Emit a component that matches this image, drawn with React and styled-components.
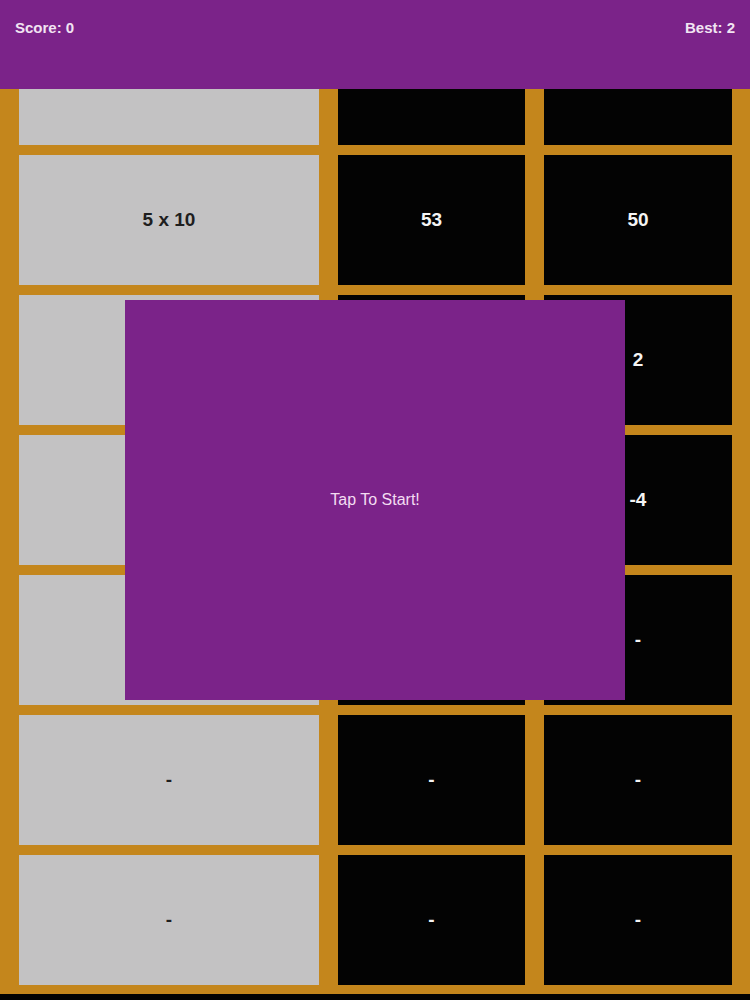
import styled, { createGlobalStyle } from "styled-components";

const GlobalStyle = createGlobalStyle`
  html, body {
    margin: 0;
    padding: 0;
    background: #030303;
    font-family: "Liberation Sans", Arial, sans-serif;
  }
`;

const Screen = styled.div`
  position: relative;
  width: 750px;
  height: 1000px;
  overflow: hidden;
  background: #030303;
`;

const Header = styled.div`
  position: absolute;
  top: 0;
  left: 0;
  right: 0;
  height: 89px;
  background: #7b2389;
  display: flex;
  justify-content: space-between;
  align-items: flex-start;
  padding: 19px 15px 0 15px;
  box-sizing: border-box;
  z-index: 2;
`;

const HeaderText = styled.span`
  color: #f1e4f2;
  font-size: 15px;
  font-weight: bold;
`;

const Board = styled.div`
  background: #c4861c;
  padding: 15px 18px 9px 19px;
  display: grid;
  grid-template-columns: 300px 187px 188px;
  grid-auto-rows: 130px;
  column-gap: 19px;
  row-gap: 10px;
`;

const Cell = styled.div`
  display: flex;
  align-items: center;
  justify-content: center;
  background: ${(p) => (p.$question ? "#c3c2c3" : "#030303")};
  color: ${(p) => (p.$question ? "#1e1e1e" : "#f4f4f4")};
  font-size: 19px;
  font-weight: bold;
`;

const Overlay = styled.div`
  position: absolute;
  left: 125px;
  top: 300px;
  width: 500px;
  height: 400px;
  background: #7b2389;
  display: flex;
  align-items: center;
  justify-content: center;
  z-index: 3;
`;

const StartText = styled.span`
  color: #f3dcf2;
  font-size: 16px;
`;

const rows = [
  ["", "", ""],
  ["5 x 10", "53", "50"],
  ["1 x 2", "3", "2"],
  ["-", "-", "-4"],
  ["-", "-", "-"],
  ["-", "-", "-"],
  ["-", "-", "-"],
];

const App = () => {
  return (
    <>
      <GlobalStyle />
      <Screen>
        <Header>
          <HeaderText>Score: 0</HeaderText>
          <HeaderText>Best: 2</HeaderText>
        </Header>
        <Board>
          {rows.map((row, i) =>
            row.map((val, j) => (
              <Cell key={`${i}-${j}`} $question={j === 0}>
                {val}
              </Cell>
            ))
          )}
        </Board>
        <Overlay>
          <StartText>Tap To Start!</StartText>
        </Overlay>
      </Screen>
    </>
  );
};

export default App;
